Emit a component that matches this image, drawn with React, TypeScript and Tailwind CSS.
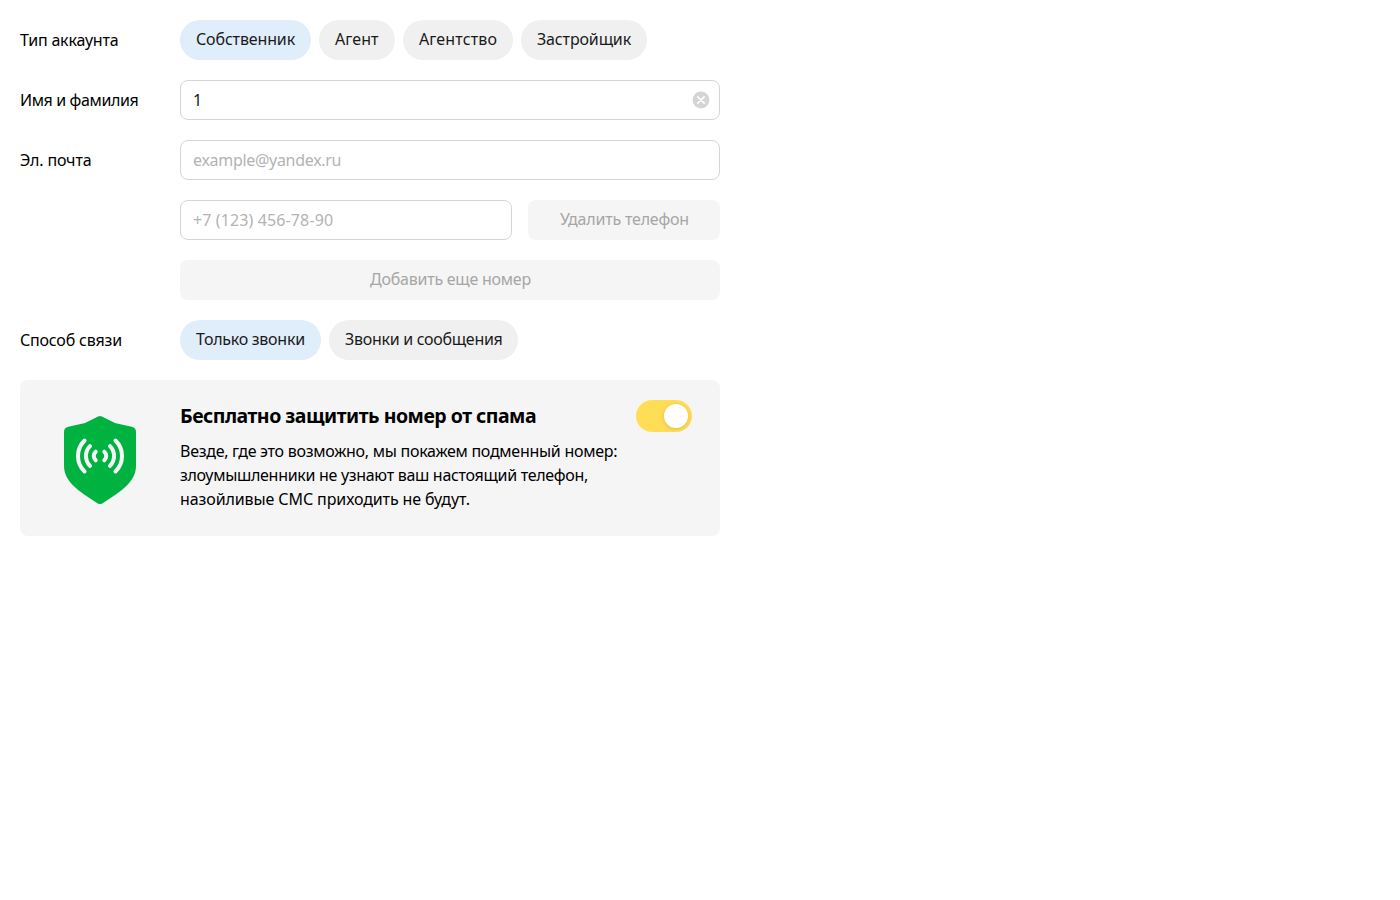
import React, { useState } from 'react';

function Row({ label, tracking = '', children }: { label?: string; tracking?: string; children: React.ReactNode }) {
  return (
    <div className="flex h-10 w-[700px] items-center">
      <div className="w-40 shrink-0 text-black">
        {label && <span className={`whitespace-nowrap ${tracking}`}>{label}</span>}
      </div>
      <div className="flex min-w-0 flex-1">{children}</div>
    </div>
  );
}

type Option = { text: string; style: string };

function Pills({ options }: { options: Option[] }) {
  const [selected, setSelected] = useState(0);
  return (
    <div className="flex gap-2">
      {options.map((option, i) => (
        <button
          key={option.text}
          type="button"
          onClick={() => setSelected(i)}
          className={`flex h-10 items-center rounded-full pb-[2px] pl-4 whitespace-nowrap text-[#1a1a1a] ${option.style} ${
            i === selected ? 'bg-[#e0edfb]' : 'bg-[#f0f0f0]'
          }`}
        >
          <span>{option.text}</span>
        </button>
      ))}
    </div>
  );
}

function ShieldIcon() {
  return (
    <svg width="72" height="88" viewBox="0 0 72 88" fill="none">
      <path
        d="M34.1 .5a4.400 4.400 0 0 1 3.800 0L50 6.500c1 .5 2 .9 3 1.100l14.800 3.100A5.200 5.200 0 0 1 72 15.800V50c0 7-3.100 13.300-8.600 19C57 75.500 48.200 80.900 38.200 87.400a4 4 0 0 1-4.400 0C23.800 80.900 15 75.500 8.600 69 3.100 63.300 0 57 0 50V15.800a5.200 5.200 0 0 1 4.200-5.100L19 7.600c1-.2 2-.6 3-1.100z"
        fill="#00b341"
      />
      <g stroke="#f5f5f5" strokeWidth="4" strokeLinecap="round">
        <path d="M20.500 24.500c-8.700 8.700-8.700 22.300 0 31" />
        <path d="M26 30.200c-5.400 5.400-5.400 14.200 0 19.600" />
        <path d="M31.700 35.700a5.800 5.800 0 0 0 0 8.600" />
        <path d="M40.300 35.700a5.800 5.800 0 0 1 0 8.600" />
        <path d="M46 30.200c5.400 5.400 5.400 14.200 0 19.600" />
        <path d="M51.500 24.500c8.700 8.700 8.700 22.300 0 31" />
      </g>
    </svg>
  );
}

export default function App() {
  return (
    <main className="flex min-h-screen flex-col gap-5 bg-white p-5 font-['Noto_Sans',sans-serif] text-base leading-5">
      <Row label="Тип аккаунта" tracking="tracking-[-0.2px]">
        <Pills
          options={[
            { text: 'Собственник', style: 'w-[131px] tracking-[-0.14px]' },
            { text: 'Агент', style: 'w-[76px] tracking-[0.1px]' },
            { text: 'Агентство', style: 'w-[110px] tracking-[0.15px]' },
            { text: 'Застройщик', style: 'w-[126px] tracking-[-0.14px]' },
          ]}
        />
      </Row>
      <Row label="Имя и фамилия" tracking="tracking-[-0.38px]">
        <div className="flex h-10 flex-1 items-center justify-between rounded-lg border border-[#d5d5d5] pr-[9px] pl-3 text-[#1a1a1a]">
          <span>1</span>
          <svg width="18" height="18" viewBox="0 0 18 18" fill="none">
            <circle cx="9" cy="9" r="8.400" fill="#d5d5d5" />
            <path d="M5.800 5.800l6.400 6.400M12.200 5.800l-6.400 6.400" stroke="#fff" strokeWidth="1.700" strokeLinecap="round" />
          </svg>
        </div>
      </Row>
      <Row label="Эл. почта" tracking="tracking-[-0.16px]">
        <div className="flex h-10 flex-1 items-center rounded-lg border border-[#d5d5d5] px-3 tracking-[-0.3px] text-[#b3b3b3]">
          <span>example@yandex.ru</span>
        </div>
      </Row>
      <Row>
        <div className="flex h-10 w-[332px] items-center rounded-lg border border-[#d5d5d5] px-3 tracking-[0.12px] text-[#b3b3b3]">
          <span>+7 (123) 456-78-90</span>
        </div>
        <button type="button" className="ml-4 flex h-10 w-48 items-center justify-center rounded-lg bg-[#f5f5f5] pb-[2px] pl-px tracking-[-0.2px] text-[#a6a6a6]">
          <span>Удалить телефон</span>
        </button>
      </Row>
      <Row>
        <button type="button" className="flex h-10 flex-1 items-center justify-center rounded-lg bg-[#f5f5f5] pb-[2px] pl-px tracking-[-0.24px] text-[#a6a6a6]">
          <span>Добавить еще номер</span>
        </button>
      </Row>
      <Row label="Способ связи" tracking="tracking-[-0.2px]">
        <Pills
          options={[
            { text: 'Только звонки', style: 'w-[141px] tracking-[-0.27px]' },
            { text: 'Звонки и сообщения', style: 'w-[189px] tracking-[-0.29px]' },
          ]}
        />
      </Row>
      <section className="flex h-[156px] w-[700px] rounded-lg bg-[#f5f5f5]">
        <div className="flex w-40 shrink-0 justify-center pt-9">
          <ShieldIcon />
        </div>
        <div className="flex-1 pt-[22px] whitespace-nowrap text-black">
          <h2 className="text-[19.5px] leading-7 font-bold tracking-[-0.5px]">
            <span>Бесплатно защитить номер от спама</span>
          </h2>
          <p className="mt-[9px] leading-6">
            <span className="tracking-[-0.27px]">Везде, где это возможно, мы покажем подменный номер:</span>
            <br />
            <span className="tracking-[-0.3px]">злоумышленники не узнают ваш настоящий телефон,</span>
            <br />
            <span className="tracking-[-0.1px]">назойливые СМС приходить не будут.</span>
          </p>
        </div>
        <div className="mt-5 mr-7 flex h-8 w-14 items-center justify-end rounded-full bg-[#ffdd57] pr-1">
          <div className="size-6 rounded-full bg-white shadow-[0_1px_4px_rgba(0,0,0,0.15)]" />
        </div>
      </section>
    </main>
  );
}
